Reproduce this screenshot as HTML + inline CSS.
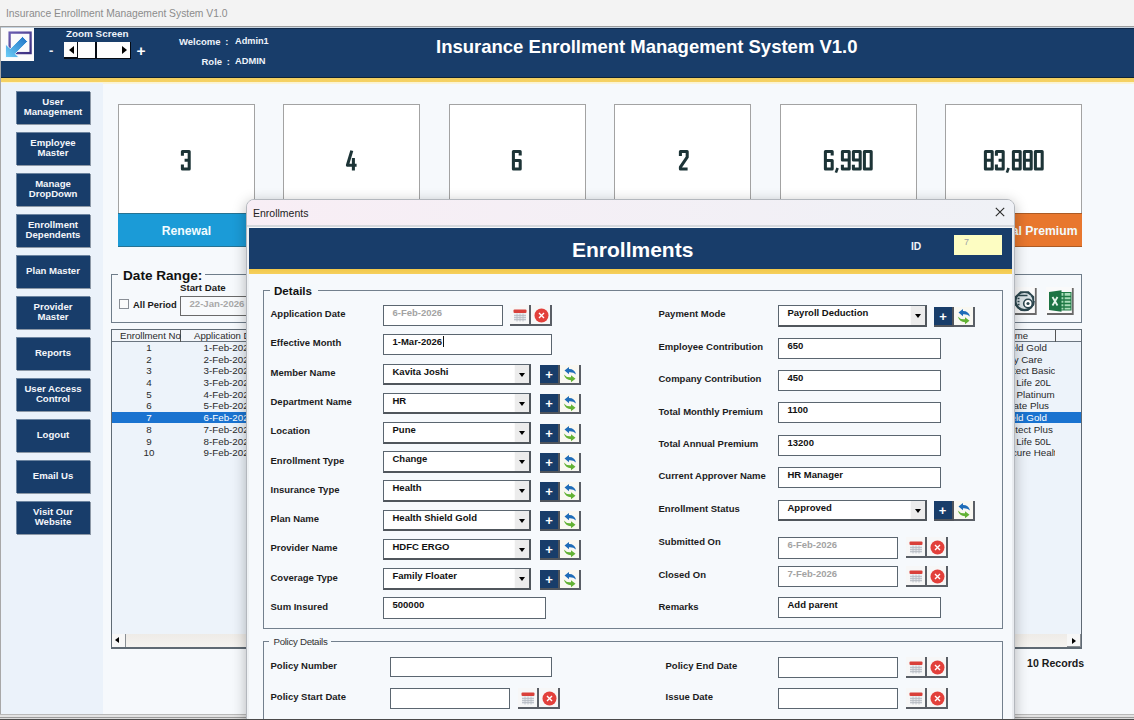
<!DOCTYPE html><html><head><meta charset="utf-8"><style>
*{box-sizing:border-box;margin:0;padding:0}
html,body{width:1134px;height:720px;overflow:hidden;background:#f3f3f3;font-family:"Liberation Sans",sans-serif}
.a{position:absolute}
.t{position:absolute;white-space:nowrap;line-height:1}
.b{font-weight:bold}
#wt{left:6px;top:9px;font-size:10.3px;color:#8c8c8c}
#frame{left:0;top:26px;width:1134px;height:694px;background:#f6f9fc;border-top:1px solid #9c9c9c;border-left:1px solid #a8a8a8}
#hdr{left:1px;top:27px;width:1133px;height:51px;background:#183d6a;border-top:1px solid #c5d3e0;border-bottom:1px solid #0f2438;box-shadow:inset 0 1px 0 #10294a}
#yel{left:1px;top:78px;width:1133px;height:6px;background:linear-gradient(#f3cf5e 0,#f6d265 4px,#fbf3cf 4px,#fbf6dc 6px)}
#side{left:1px;top:83px;width:102px;height:631px;background:#ebf2fa}
.sb{position:absolute;left:16px;width:74px;height:33px;background:#183d6a;box-shadow:1px 1px 0 #8c98a6,inset 1px 1px 0 #6c84a0;color:#f4f6fa;font-weight:bold;font-size:9.6px;text-align:center;display:flex;align-items:center;justify-content:center;line-height:10px;padding-bottom:0.5px}
.card{position:absolute;top:104px;width:137px;height:142px;background:#fff;border:1px solid #a3a3a3}
.card .n{position:absolute;left:0;right:0;top:42px;text-align:center;font-weight:bold;font-size:29px;color:#1e3537;transform:scaleX(0.69);line-height:1}
.card .lb{position:absolute;left:-1px;right:-1px;top:108px;height:34px;padding-top:0px;border-top:1px solid rgba(60,40,20,0.35);border-bottom:1px solid rgba(60,40,20,0.35);color:#f2fbff;font-weight:bold;font-size:12.2px;white-space:nowrap;text-align:center;line-height:34px}
#bot{left:0;top:714px;width:1134px;height:6px;background:linear-gradient(#b9b9b9 0,#b9b9b9 1px,#e2e2e2 1px,#e2e2e2 3px,#9a9a9a 3px,#9a9a9a 4px,#dcdcdc 4px,#dcdcdc 5px,#555 5px)}
.tb{position:absolute;background:#fff;border:2px solid #5b6670;border-width:1.5px 1.7px 1.7px 1.5px}
.tx{position:absolute;white-space:nowrap;line-height:1;font-weight:bold;font-size:9.5px;color:#111}
.lbl{position:absolute;white-space:nowrap;line-height:1;font-weight:bold;font-size:9.5px;color:#1c1c1c}
.dd{position:absolute;top:0;right:0;width:15px;bottom:0;background:#ececec;border-left:1px solid #fafafa}
.dd:after{content:"";position:absolute;left:4px;top:8px;border-left:3.5px solid transparent;border-right:3.5px solid transparent;border-top:4px solid #000}
.pb{position:absolute;width:20px;height:20px;background:#183d6a;border-right:2px solid #50555c;border-bottom:2px solid #50555c}
.pb:after{content:"+";position:absolute;left:0;right:0;top:3px;text-align:center;color:#fff;font-weight:bold;font-size:13px;line-height:1}
.rb{position:absolute;width:21px;height:20px;background:#f9f8f2;border-right:2px solid #5a5f66;border-bottom:2px solid #5a5f66}
.cb{position:absolute;width:21px;height:21px;background:#f7f7f7;border-right:2px solid #5a5f66;border-bottom:2px solid #5a5f66}
.xb{position:absolute;width:21px;height:21px;background:#f7f7f7;border-right:2px solid #5a5f66;border-bottom:2px solid #5a5f66}
</style></head><body>
<div class="t" id="wt">Insurance Enrollment Management System V1.0</div>
<div class="a" id="frame"></div><div class="a" id="hdr"></div><div class="a" id="yel"></div><div class="a" id="side"></div>
<div class="a" style="left:1px;top:28px;width:33px;height:33px;background:#fbfbfb"></div>
<svg class="a" style="left:1px;top:28px" width="34" height="34" viewBox="0 0 34 34">
<defs><linearGradient id="ag" x1="0" y1="1" x2="1" y2="0"><stop offset="0" stop-color="#6fd0f8"/><stop offset="1" stop-color="#1c70c4"/></linearGradient>
<linearGradient id="pg" x1="0" y1="0" x2="1" y2="1"><stop offset="0" stop-color="#6a5db0"/><stop offset="1" stop-color="#3b2f80"/></linearGradient></defs>
<rect x="8.6" y="4.6" width="21" height="20.5" fill="none" stroke="url(#pg)" stroke-width="2.3"/>
<path d="M21.5 8.5 L26.5 13.5 L14.25 25.75 L18 29.5 L4.5 29.5 L4.5 16 L9.25 20.75 Z" fill="url(#ag)" stroke="#fff" stroke-width="0.8"/>
</svg>
<div class="t b" style="left:66px;top:28.5px;font-size:9.9px;color:#eef3fa">Zoom Screen</div>
<div class="t b" style="left:49px;top:44px;font-size:13px;color:#e8eef6">-</div>
<div class="t b" style="left:136.5px;top:42.5px;font-size:15.5px;color:#fff">+</div>
<div class="a" style="left:64px;top:42px;width:67px;height:17px;background:#050a12"></div>
<div class="a" style="left:64px;top:42px;width:13px;height:15px;background:#fdfdfd"></div>
<div class="a" style="left:78px;top:42px;width:17px;height:16px;background:#fdfdfd"></div>
<div class="a" style="left:97px;top:42px;width:33px;height:16px;background:#fdfdfd"></div>
<div class="a" style="left:69px;top:46px;width:0;height:0;border-top:4px solid transparent;border-bottom:4px solid transparent;border-right:5px solid #000"></div>
<div class="a" style="left:122px;top:46px;width:0;height:0;border-top:4px solid transparent;border-bottom:4px solid transparent;border-left:5px solid #000"></div>
<div class="t b" style="left:179px;top:36.5px;font-size:9.5px;color:#eef3fa;word-spacing:2px">Welcome :</div>
<div class="t b" style="left:235px;top:36.5px;font-size:9.2px;color:#eef3fa">Admin1</div>
<div class="t b" style="left:201.5px;top:57px;font-size:9.5px;color:#eef3fa;word-spacing:2px">Role :</div>
<div class="t b" style="left:235px;top:57px;font-size:9.3px;color:#eef3fa">ADMIN</div>
<div class="t b" style="left:436px;top:38px;font-size:18.5px;color:#fff">Insurance Enrollment Management System V1.0</div>

<div class="sb" style="top:91px">User<br>Management</div>
<div class="sb" style="top:132px">Employee<br>Master</div>
<div class="sb" style="top:173px">Manage<br>DropDown</div>
<div class="sb" style="top:214px">Enrollment<br>Dependents</div>
<div class="sb" style="top:255px">Plan Master</div>
<div class="sb" style="top:296px">Provider<br>Master</div>
<div class="sb" style="top:337px">Reports</div>
<div class="sb" style="top:378px">User Access<br>Control</div>
<div class="sb" style="top:419px">Logout</div>
<div class="sb" style="top:460px">Email Us</div>
<div class="sb" style="top:501px">Visit Our<br>Website</div>
<div class="card" style="left:118px"><div class="lb" style="background:#1b9bd7">Renewal</div></div>
<div class="card" style="left:283px"><div class="lb" style="background:#1b9bd7"></div></div>
<div class="card" style="left:449px"><div class="lb" style="background:#1b9bd7"></div></div>
<div class="card" style="left:614px"><div class="lb" style="background:#1b9bd7"></div></div>
<div class="card" style="left:780px"><div class="lb" style="background:#e8772e"></div></div>
<div class="card" style="left:945px"><div class="lb" style="background:#e8772e">Total Annual Premium</div></div>
<svg class="a" style="left:181px;top:150px;overflow:visible" width="11.0" height="23" viewBox="0 0 11.0 23"><path transform="translate(0.00 0)" d="M1.4 5.8V1.4H8.2V19H1.4V14.6M3.6 10.2H8.2" stroke="#1d3437" stroke-width="3.05" fill="none" stroke-linejoin="round"/></svg>
<svg class="a" style="left:346px;top:150px;overflow:visible" width="11.0" height="23" viewBox="0 0 11.0 23"><path transform="translate(0.00 0)" d="M5.8 0.6L1.4 15.2H10.6M7.4 8V20.4" stroke="#1d3437" stroke-width="3.05" fill="none" stroke-linejoin="round"/></svg>
<svg class="a" style="left:512px;top:150px;overflow:visible" width="11.0" height="23" viewBox="0 0 11.0 23"><path transform="translate(0.00 0)" d="M8.2 5.6V1.4H1.4V19H8.2V10.4H1.4" stroke="#1d3437" stroke-width="3.05" fill="none" stroke-linejoin="round"/></svg>
<svg class="a" style="left:678.5px;top:150px;overflow:visible" width="11.0" height="23" viewBox="0 0 11.0 23"><path transform="translate(0.00 0)" d="M1.4 6V1.4H8.2V7.2L1.4 17.2V19H8.6" stroke="#1d3437" stroke-width="3.05" fill="none" stroke-linejoin="round"/></svg>
<svg class="a" style="left:824px;top:150px;overflow:visible" width="50.0" height="23" viewBox="0 0 50.0 23"><path transform="translate(0.00 0)" d="M8.2 5.6V1.4H1.4V19H8.2V10.4H1.4" stroke="#1d3437" stroke-width="3.05" fill="none" stroke-linejoin="round"/><path d="M13.60 18 L11.90 22.6" stroke="#1d3437" stroke-width="2.6" fill="none"/><path transform="translate(17.00 0)" d="M1.4 14.8V19H8.2V1.4H1.4V10H8.2" stroke="#1d3437" stroke-width="3.05" fill="none" stroke-linejoin="round"/><path transform="translate(28.00 0)" d="M1.4 14.8V19H8.2V1.4H1.4V10H8.2" stroke="#1d3437" stroke-width="3.05" fill="none" stroke-linejoin="round"/><path transform="translate(39.00 0)" d="M1.4 1.4H8.2V19H1.4Z" stroke="#1d3437" stroke-width="3.05" fill="none" stroke-linejoin="round"/></svg>
<svg class="a" style="left:984.3px;top:150px;overflow:visible" width="61.0" height="23" viewBox="0 0 61.0 23"><path transform="translate(0.00 0)" d="M1.4 1.4H8.2V19H1.4ZM1.4 10.2H8.2" stroke="#1d3437" stroke-width="3.05" fill="none" stroke-linejoin="round"/><path transform="translate(11.00 0)" d="M1.4 5.8V1.4H8.2V19H1.4V14.6M3.6 10.2H8.2" stroke="#1d3437" stroke-width="3.05" fill="none" stroke-linejoin="round"/><path d="M24.60 18 L22.90 22.6" stroke="#1d3437" stroke-width="2.6" fill="none"/><path transform="translate(28.00 0)" d="M1.4 1.4H8.2V19H1.4ZM1.4 10.2H8.2" stroke="#1d3437" stroke-width="3.05" fill="none" stroke-linejoin="round"/><path transform="translate(39.00 0)" d="M1.4 1.4H8.2V19H1.4ZM1.4 10.2H8.2" stroke="#1d3437" stroke-width="3.05" fill="none" stroke-linejoin="round"/><path transform="translate(50.00 0)" d="M1.4 1.4H8.2V19H1.4Z" stroke="#1d3437" stroke-width="3.05" fill="none" stroke-linejoin="round"/></svg>
<div class="a" style="left:111px;top:273.5px;width:971px;height:49.5px;border:1px solid #6f7d8a;"></div>
<div class="a" style="left:118px;top:268px;width:87px;height:12px;background:#f6f9fc;"></div>
<div class="t" style="left:123px;top:268.5px;font-size:13.6px;font-weight:bold;color:#111;">Date Range:</div>
<div class="t" style="left:180px;top:283px;font-size:9.7px;font-weight:bold;color:#1a1a1a;">Start Date</div>
<div class="a" style="left:119px;top:299px;width:10px;height:10px;border:1px solid #8a8f96;background:#fbfbfb;"></div>
<div class="t" style="left:133px;top:300px;font-size:9.4px;font-weight:bold;color:#1a1a1a;">All Period</div>
<div class="a" style="left:180px;top:296px;width:80px;height:20px;border:1px solid #6a6a6a;background:#f8fafc;"></div>
<div class="t" style="left:189.5px;top:299px;font-size:9.6px;font-weight:bold;color:#a8a8a8;">22-Jan-2026</div>
<svg class="a" style="left:1012px;top:287px" width="25" height="28" viewBox="0 0 25 28">
<rect x="0" y="0" width="25" height="28" fill="#fafafa"/><path d="M23.8 1V27H1" stroke="#6a6a6a" stroke-width="1.8" fill="none"/>
<path d="M8.3 4.3 L16.7 4.3 L22.2 9.6 L22.2 18 L16.7 23.4 L8.3 23.4 L2.8 18 L2.8 9.6 Z" fill="#2c474f"/>
<circle cx="12.5" cy="13.9" r="8" fill="#d9e2e6"/>
<path d="M5.5 8.5h10M5.5 11.5h2M5.5 14.5h2M5.5 17.5h2" stroke="#2c474f" stroke-width="1.6"/>
<circle cx="16" cy="16.5" r="4.3" fill="#fff" stroke="#2c474f" stroke-width="1.6"/><circle cx="16" cy="16.5" r="1.6" fill="#2c474f"/>
<path d="M3 14 A9.5 9.5 0 0 0 22 14" fill="none" stroke="#2c474f" stroke-width="1.6"/>
</svg>
<svg class="a" style="left:1046px;top:287px" width="28" height="28" viewBox="0 0 28 28">
<rect x="0" y="0" width="28" height="28" fill="#fafafa"/><path d="M26.8 1V27H1" stroke="#6a6a6a" stroke-width="1.8" fill="none"/>
<rect x="14" y="5.5" width="11" height="17.5" fill="#a8dcb8" stroke="#1f7a45" stroke-width="1"/>
<path d="M14 9.5h11M14 13h11M14 16.5h11M14 20h11M18 5.5v17.5" stroke="#1f7a45" stroke-width="1.3"/>
<path d="M3 5 L15.5 3.3 V24.7 L3 23 Z" fill="#1d7444"/>
<path d="M6.5 10 L11.5 18.5 M11.5 10 L6.5 18.5" stroke="#e8f5ec" stroke-width="1.8"/>
</svg>
<div class="a" style="left:111px;top:329px;width:971px;height:320px;border:1px solid #5f6a74;border-width:1px 1px 2px 1px;background:#edf3fa;"></div>
<div class="a" style="left:112px;top:330px;width:969px;height:12px;background:#f3f6fa;border-bottom:1px solid #6b7580;"></div>
<div class="a" style="left:180px;top:330px;width:1px;height:12px;background:#555;"></div>
<div class="a" style="left:1055px;top:330px;width:1px;height:12px;background:#555;"></div>
<div class="t" style="left:120px;top:331px;font-size:9.6px;color:#2a2a2a;">Enrollment No</div>
<div class="t" style="left:194px;top:331px;font-size:9.6px;color:#2a2a2a;">Application Date</div>
<div class="t" style="right:106px;top:331px;font-size:9.6px;color:#2a2a2a">Plan Name</div>
<div class="t" style="left:112px;width:74px;top:342.79999999999995px;font-size:9.8px;color:#2a2a2a;text-align:center">1</div>
<div class="t" style="left:203.5px;top:342.79999999999995px;font-size:9.8px;color:#2a2a2a;">1-Feb-2026</div>
<div class="a" style="left:1000px;width:55px;top:341.4px;height:11.72px;overflow:hidden"><div class="t" style="right:8px;top:1.4px;font-size:9.8px;color:#2a2a2a">Health Shield Gold</div></div>
<div class="t" style="left:112px;width:74px;top:354.52px;font-size:9.8px;color:#2a2a2a;text-align:center">2</div>
<div class="t" style="left:203.5px;top:354.52px;font-size:9.8px;color:#2a2a2a;">2-Feb-2026</div>
<div class="a" style="left:1000px;width:55px;top:353.12px;height:11.72px;overflow:hidden"><div class="t" style="right:12.5px;top:1.4px;font-size:9.8px;color:#2a2a2a">Family Care</div></div>
<div class="t" style="left:112px;width:74px;top:366.23999999999995px;font-size:9.8px;color:#2a2a2a;text-align:center">3</div>
<div class="t" style="left:203.5px;top:366.23999999999995px;font-size:9.8px;color:#2a2a2a;">3-Feb-2026</div>
<div class="a" style="left:1000px;width:55px;top:364.84px;height:11.72px;overflow:hidden"><div class="t" style="right:-0.5px;top:1.4px;font-size:9.8px;color:#2a2a2a">Protect Basic</div></div>
<div class="t" style="left:112px;width:74px;top:377.96px;font-size:9.8px;color:#2a2a2a;text-align:center">4</div>
<div class="t" style="left:203.5px;top:377.96px;font-size:9.8px;color:#2a2a2a;">3-Feb-2026</div>
<div class="a" style="left:1000px;width:55px;top:376.56px;height:11.72px;overflow:hidden"><div class="t" style="right:4px;top:1.4px;font-size:9.8px;color:#2a2a2a">Term Life 20L</div></div>
<div class="t" style="left:112px;width:74px;top:389.67999999999995px;font-size:9.8px;color:#2a2a2a;text-align:center">5</div>
<div class="t" style="left:203.5px;top:389.67999999999995px;font-size:9.8px;color:#2a2a2a;">4-Feb-2026</div>
<div class="a" style="left:1000px;width:55px;top:388.28px;height:11.72px;overflow:hidden"><div class="t" style="right:0.2999999999999545px;top:1.4px;font-size:9.8px;color:#2a2a2a">Gold Platinum</div></div>
<div class="t" style="left:112px;width:74px;top:401.4px;font-size:9.8px;color:#2a2a2a;text-align:center">6</div>
<div class="t" style="left:203.5px;top:401.4px;font-size:9.8px;color:#2a2a2a;">5-Feb-2026</div>
<div class="a" style="left:1000px;width:55px;top:400.0px;height:11.72px;overflow:hidden"><div class="t" style="right:6px;top:1.4px;font-size:9.8px;color:#2a2a2a">Corporate Plus</div></div>
<div class="a" style="left:112px;top:411.71999999999997px;width:969px;height:11.720000000000027px;background:#1a73d0;"></div>
<div class="t" style="left:112px;width:74px;top:413.11999999999995px;font-size:9.8px;color:#fff;text-align:center">7</div>
<div class="t" style="left:203.5px;top:413.11999999999995px;font-size:9.8px;color:#fff;">6-Feb-2026</div>
<div class="a" style="left:1000px;width:55px;top:411.71999999999997px;height:11.72px;overflow:hidden"><div class="t" style="right:8px;top:1.4px;font-size:9.8px;color:#fff">Health Shield Gold</div></div>
<div class="t" style="left:112px;width:74px;top:424.84px;font-size:9.8px;color:#2a2a2a;text-align:center">8</div>
<div class="t" style="left:203.5px;top:424.84px;font-size:9.8px;color:#2a2a2a;">7-Feb-2026</div>
<div class="a" style="left:1000px;width:55px;top:423.44px;height:11.72px;overflow:hidden"><div class="t" style="right:2.2000000000000455px;top:1.4px;font-size:9.8px;color:#2a2a2a">Protect Plus</div></div>
<div class="t" style="left:112px;width:74px;top:436.55999999999995px;font-size:9.8px;color:#2a2a2a;text-align:center">9</div>
<div class="t" style="left:203.5px;top:436.55999999999995px;font-size:9.8px;color:#2a2a2a;">8-Feb-2026</div>
<div class="a" style="left:1000px;width:55px;top:435.15999999999997px;height:11.72px;overflow:hidden"><div class="t" style="right:4px;top:1.4px;font-size:9.8px;color:#2a2a2a">Term Life 50L</div></div>
<div class="t" style="left:112px;width:74px;top:448.28px;font-size:9.8px;color:#2a2a2a;text-align:center">10</div>
<div class="t" style="left:203.5px;top:448.28px;font-size:9.8px;color:#2a2a2a;">9-Feb-2026</div>
<div class="a" style="left:1000px;width:55px;top:446.88px;height:11.72px;overflow:hidden"><div class="t" style="right:-7px;top:1.4px;font-size:9.8px;color:#2a2a2a">Secure Health</div></div>
<div class="a" style="left:112px;top:634px;width:969px;height:13px;background:linear-gradient(#eeebe7,#f5f3f0);"></div>
<div class="a" style="left:112px;top:634px;width:14px;height:13px;background:#f7f7f7;border-right:1.5px solid #8a8f94;"></div>
<div class="a" style="left:115px;top:637px;border-top:3.5px solid transparent;border-bottom:3.5px solid transparent;border-right:4px solid #000"></div>
<div class="a" style="left:1067px;top:634px;width:14px;height:13px;background:#f7f7f7;border-right:1px solid #8a8f94;border-bottom:1px solid #8a8f94;"></div>
<div class="a" style="left:1072px;top:637.5px;border-top:3.5px solid transparent;border-bottom:3.5px solid transparent;border-left:4px solid #000"></div>
<div class="t" style="left:1027px;top:658px;font-size:10.6px;font-weight:bold;color:#1a1a1a;">10 Records</div>
<div class="a" id="bot"></div>
<div class="a" style="left:246px;top:198.5px;width:769px;height:535px;background:#f6f9fc;border:1px solid #b3b7bd;border-radius:8px 8px 0 0;box-shadow:0 3px 14px rgba(0,0,0,0.28)"></div>
<div class="a" style="left:247px;top:199.5px;width:767px;height:25.5px;background:linear-gradient(90deg,#f8eef5,#eff1f6);border-radius:7px 7px 0 0;"></div>
<div class="a" style="left:247px;top:225px;width:767px;height:2px;background:#d5d8dd;"></div>
<div class="a" style="left:247px;top:227px;width:2px;height:493px;background:#eef1f4;"></div>
<div class="a" style="left:1012px;top:227px;width:2px;height:493px;background:#e9ecf0;"></div>
<div class="t" style="left:253px;top:207.5px;font-size:10.5px;color:#222;">Enrollments</div>
<svg class="a" style="left:995px;top:206.5px" width="10" height="10" viewBox="0 0 10 10"><path d="M0.8 0.8L9.2 9.2M9.2 0.8L0.8 9.2" stroke="#2a2a2a" stroke-width="1.1"/></svg>
<div class="a" style="left:249px;top:227.5px;width:763px;height:41.69999999999999px;background:#183d6a;"></div>
<div class="a" style="left:249px;top:269.2px;width:763px;height:4.800000000000011px;background:linear-gradient(#f2c84a,#f5d05e);"></div>
<div class="t" style="left:572px;top:239px;font-size:21px;font-weight:bold;color:#fff;">Enrollments</div>
<div class="t" style="left:911px;top:241.5px;font-size:10.3px;font-weight:bold;color:#f0f4f8;">ID</div>
<div class="a" style="left:954px;top:235px;width:48px;height:20px;background:#fdfdc2;"></div>
<div class="t" style="left:964px;top:237.5px;font-size:9px;color:#9aa0a6;">7</div>
<div class="a" style="left:262.5px;top:289.5px;width:740.5px;height:339.5px;border:1px solid #73808d;"></div>
<div class="a" style="left:270px;top:284px;width:48px;height:12px;background:#f5f9fc;"></div>
<div class="t" style="left:274px;top:285px;font-size:11.6px;font-weight:bold;color:#111;">Details</div>
<div class="t" style="left:270.5px;top:309px;font-size:9.5px;font-weight:bold;color:#1c1c1c;">Application Date</div>
<div class="t" style="left:270.5px;top:338px;font-size:9.5px;font-weight:bold;color:#1c1c1c;">Effective Month</div>
<div class="t" style="left:270.5px;top:367.5px;font-size:9.5px;font-weight:bold;color:#1c1c1c;">Member Name</div>
<div class="t" style="left:270.5px;top:397px;font-size:9.5px;font-weight:bold;color:#1c1c1c;">Department Name</div>
<div class="t" style="left:270.5px;top:426px;font-size:9.5px;font-weight:bold;color:#1c1c1c;">Location</div>
<div class="t" style="left:270.5px;top:455.5px;font-size:9.5px;font-weight:bold;color:#1c1c1c;">Enrollment Type</div>
<div class="t" style="left:270.5px;top:485px;font-size:9.5px;font-weight:bold;color:#1c1c1c;">Insurance Type</div>
<div class="t" style="left:270.5px;top:514px;font-size:9.5px;font-weight:bold;color:#1c1c1c;">Plan Name</div>
<div class="t" style="left:270.5px;top:543px;font-size:9.5px;font-weight:bold;color:#1c1c1c;">Provider Name</div>
<div class="t" style="left:270.5px;top:573px;font-size:9.5px;font-weight:bold;color:#1c1c1c;">Coverage Type</div>
<div class="t" style="left:270.5px;top:602px;font-size:9.5px;font-weight:bold;color:#1c1c1c;">Sum Insured</div>
<div class="tb" style="left:383px;top:305px;width:120px;height:21px"></div>
<div class="t" style="left:392.5px;top:308px;font-size:9.5px;font-weight:bold;color:#a3a3a3;">6-Feb-2026</div>
<div class="cb" style="left:510px;top:305px"><svg style="position:absolute;left:3px;top:4px" width="14" height="13" viewBox="0 0 14 13">
<rect x="0.5" y="0.5" width="13" height="3.5" rx="1" fill="#d9403a"/><rect x="1" y="4.5" width="12" height="7.5" fill="#e4e6ea"/>
<path d="M1 6.5h12M1 8.5h12M1 10.5h12M4 4.5v8M7 4.5v8M10 4.5v8" stroke="#b5bac2" stroke-width="0.8"/></svg></div>
<div class="xb" style="left:531px;top:305px"><svg style="position:absolute;left:3px;top:3px" width="15" height="15" viewBox="0 0 15 15">
<circle cx="7.5" cy="7.5" r="7" fill="#e2403b"/><path d="M5 5L10 10M10 5L5 10" stroke="#fff" stroke-width="1.4"/></svg></div>
<div class="tb" style="left:383px;top:334px;width:169px;height:21px"></div>
<div class="t" style="left:392.5px;top:337px;font-size:9.5px;font-weight:bold;color:#111;">1-Mar-2026</div>
<div class="a" style="left:443px;top:336px;width:1px;height:11px;background:#111;"></div>
<div class="tb" style="left:383px;top:363.6px;width:148px;height:21.5px;border-width:1.5px 2.5px 2.5px 1.5px;border-right-color:#50565c;border-bottom-color:#50565c"><div class="dd"></div></div>
<div class="t" style="left:392.5px;top:366.6px;font-size:9.5px;font-weight:bold;color:#111;">Kavita Joshi</div>
<div class="pb" style="left:540px;top:365.1px"></div>
<div class="rb" style="left:560px;top:365.1px"><svg style="position:absolute;left:0;top:0" width="19" height="18" viewBox="0 0 19 18">
<path d="M4.5 5.5 L9 2 L9 4 Q14.5 3.8 16 9.5 Q13.2 6.8 9 7.2 L9 9.3 Z" fill="#1f6cb8"/>
<path d="M3.8 9.5 Q6.5 12.8 11 12.3 L11 10.2 L15.5 13.8 L11 17.3 L11 15.2 Q5.5 15 3.8 9.5 Z" fill="#62b234"/>
</svg></div>
<div class="tb" style="left:383px;top:392.8px;width:148px;height:21.5px;border-width:1.5px 2.5px 2.5px 1.5px;border-right-color:#50565c;border-bottom-color:#50565c"><div class="dd"></div></div>
<div class="t" style="left:392.5px;top:395.8px;font-size:9.5px;font-weight:bold;color:#111;">HR</div>
<div class="pb" style="left:540px;top:394.3px"></div>
<div class="rb" style="left:560px;top:394.3px"><svg style="position:absolute;left:0;top:0" width="19" height="18" viewBox="0 0 19 18">
<path d="M4.5 5.5 L9 2 L9 4 Q14.5 3.8 16 9.5 Q13.2 6.8 9 7.2 L9 9.3 Z" fill="#1f6cb8"/>
<path d="M3.8 9.5 Q6.5 12.8 11 12.3 L11 10.2 L15.5 13.8 L11 17.3 L11 15.2 Q5.5 15 3.8 9.5 Z" fill="#62b234"/>
</svg></div>
<div class="tb" style="left:383px;top:422.0px;width:148px;height:21.5px;border-width:1.5px 2.5px 2.5px 1.5px;border-right-color:#50565c;border-bottom-color:#50565c"><div class="dd"></div></div>
<div class="t" style="left:392.5px;top:425.0px;font-size:9.5px;font-weight:bold;color:#111;">Pune</div>
<div class="pb" style="left:540px;top:423.5px"></div>
<div class="rb" style="left:560px;top:423.5px"><svg style="position:absolute;left:0;top:0" width="19" height="18" viewBox="0 0 19 18">
<path d="M4.5 5.5 L9 2 L9 4 Q14.5 3.8 16 9.5 Q13.2 6.8 9 7.2 L9 9.3 Z" fill="#1f6cb8"/>
<path d="M3.8 9.5 Q6.5 12.8 11 12.3 L11 10.2 L15.5 13.8 L11 17.3 L11 15.2 Q5.5 15 3.8 9.5 Z" fill="#62b234"/>
</svg></div>
<div class="tb" style="left:383px;top:451.20000000000005px;width:148px;height:21.5px;border-width:1.5px 2.5px 2.5px 1.5px;border-right-color:#50565c;border-bottom-color:#50565c"><div class="dd"></div></div>
<div class="t" style="left:392.5px;top:454.20000000000005px;font-size:9.5px;font-weight:bold;color:#111;">Change</div>
<div class="pb" style="left:540px;top:452.70000000000005px"></div>
<div class="rb" style="left:560px;top:452.70000000000005px"><svg style="position:absolute;left:0;top:0" width="19" height="18" viewBox="0 0 19 18">
<path d="M4.5 5.5 L9 2 L9 4 Q14.5 3.8 16 9.5 Q13.2 6.8 9 7.2 L9 9.3 Z" fill="#1f6cb8"/>
<path d="M3.8 9.5 Q6.5 12.8 11 12.3 L11 10.2 L15.5 13.8 L11 17.3 L11 15.2 Q5.5 15 3.8 9.5 Z" fill="#62b234"/>
</svg></div>
<div class="tb" style="left:383px;top:480.40000000000003px;width:148px;height:21.5px;border-width:1.5px 2.5px 2.5px 1.5px;border-right-color:#50565c;border-bottom-color:#50565c"><div class="dd"></div></div>
<div class="t" style="left:392.5px;top:483.40000000000003px;font-size:9.5px;font-weight:bold;color:#111;">Health</div>
<div class="pb" style="left:540px;top:481.90000000000003px"></div>
<div class="rb" style="left:560px;top:481.90000000000003px"><svg style="position:absolute;left:0;top:0" width="19" height="18" viewBox="0 0 19 18">
<path d="M4.5 5.5 L9 2 L9 4 Q14.5 3.8 16 9.5 Q13.2 6.8 9 7.2 L9 9.3 Z" fill="#1f6cb8"/>
<path d="M3.8 9.5 Q6.5 12.8 11 12.3 L11 10.2 L15.5 13.8 L11 17.3 L11 15.2 Q5.5 15 3.8 9.5 Z" fill="#62b234"/>
</svg></div>
<div class="tb" style="left:383px;top:509.6px;width:148px;height:21.5px;border-width:1.5px 2.5px 2.5px 1.5px;border-right-color:#50565c;border-bottom-color:#50565c"><div class="dd"></div></div>
<div class="t" style="left:392.5px;top:512.6px;font-size:9.5px;font-weight:bold;color:#111;">Health Shield Gold</div>
<div class="pb" style="left:540px;top:511.1px"></div>
<div class="rb" style="left:560px;top:511.1px"><svg style="position:absolute;left:0;top:0" width="19" height="18" viewBox="0 0 19 18">
<path d="M4.5 5.5 L9 2 L9 4 Q14.5 3.8 16 9.5 Q13.2 6.8 9 7.2 L9 9.3 Z" fill="#1f6cb8"/>
<path d="M3.8 9.5 Q6.5 12.8 11 12.3 L11 10.2 L15.5 13.8 L11 17.3 L11 15.2 Q5.5 15 3.8 9.5 Z" fill="#62b234"/>
</svg></div>
<div class="tb" style="left:383px;top:538.8px;width:148px;height:21.5px;border-width:1.5px 2.5px 2.5px 1.5px;border-right-color:#50565c;border-bottom-color:#50565c"><div class="dd"></div></div>
<div class="t" style="left:392.5px;top:541.8px;font-size:9.5px;font-weight:bold;color:#111;">HDFC ERGO</div>
<div class="pb" style="left:540px;top:540.3px"></div>
<div class="rb" style="left:560px;top:540.3px"><svg style="position:absolute;left:0;top:0" width="19" height="18" viewBox="0 0 19 18">
<path d="M4.5 5.5 L9 2 L9 4 Q14.5 3.8 16 9.5 Q13.2 6.8 9 7.2 L9 9.3 Z" fill="#1f6cb8"/>
<path d="M3.8 9.5 Q6.5 12.8 11 12.3 L11 10.2 L15.5 13.8 L11 17.3 L11 15.2 Q5.5 15 3.8 9.5 Z" fill="#62b234"/>
</svg></div>
<div class="tb" style="left:383px;top:568.0px;width:148px;height:21.5px;border-width:1.5px 2.5px 2.5px 1.5px;border-right-color:#50565c;border-bottom-color:#50565c"><div class="dd"></div></div>
<div class="t" style="left:392.5px;top:571.0px;font-size:9.5px;font-weight:bold;color:#111;">Family Floater</div>
<div class="pb" style="left:540px;top:569.5px"></div>
<div class="rb" style="left:560px;top:569.5px"><svg style="position:absolute;left:0;top:0" width="19" height="18" viewBox="0 0 19 18">
<path d="M4.5 5.5 L9 2 L9 4 Q14.5 3.8 16 9.5 Q13.2 6.8 9 7.2 L9 9.3 Z" fill="#1f6cb8"/>
<path d="M3.8 9.5 Q6.5 12.8 11 12.3 L11 10.2 L15.5 13.8 L11 17.3 L11 15.2 Q5.5 15 3.8 9.5 Z" fill="#62b234"/>
</svg></div>
<div class="tb" style="left:383px;top:597px;width:163px;height:21.5px"></div>
<div class="t" style="left:392.5px;top:600px;font-size:9.5px;font-weight:bold;color:#111;">500000</div>
<div class="t" style="left:658.5px;top:309px;font-size:9.5px;font-weight:bold;color:#1c1c1c;">Payment Mode</div>
<div class="t" style="left:658.5px;top:342px;font-size:9.5px;font-weight:bold;color:#1c1c1c;">Employee Contribution</div>
<div class="t" style="left:658.5px;top:374px;font-size:9.5px;font-weight:bold;color:#1c1c1c;">Company Contribution</div>
<div class="t" style="left:658.5px;top:407px;font-size:9.5px;font-weight:bold;color:#1c1c1c;">Total Monthly Premium</div>
<div class="t" style="left:658.5px;top:439px;font-size:9.5px;font-weight:bold;color:#1c1c1c;">Total Annual Premium</div>
<div class="t" style="left:658.5px;top:471px;font-size:9.5px;font-weight:bold;color:#1c1c1c;">Current Approver Name</div>
<div class="t" style="left:658.5px;top:504px;font-size:9.5px;font-weight:bold;color:#1c1c1c;">Enrollment Status</div>
<div class="t" style="left:658.5px;top:537px;font-size:9.5px;font-weight:bold;color:#1c1c1c;">Submitted On</div>
<div class="t" style="left:658.5px;top:569.5px;font-size:9.5px;font-weight:bold;color:#1c1c1c;">Closed On</div>
<div class="t" style="left:658.5px;top:602px;font-size:9.5px;font-weight:bold;color:#1c1c1c;">Remarks</div>
<div class="tb" style="left:778px;top:305px;width:149px;height:21.5px;border-width:1.5px 2.5px 2.5px 1.5px;border-right-color:#50565c;border-bottom-color:#50565c"><div class="dd"></div></div>
<div class="t" style="left:787.5px;top:308px;font-size:9.5px;font-weight:bold;color:#111;">Payroll Deduction</div>
<div class="pb" style="left:934px;top:306.5px"></div>
<div class="rb" style="left:954px;top:306.5px"><svg style="position:absolute;left:0;top:0" width="19" height="18" viewBox="0 0 19 18">
<path d="M4.5 5.5 L9 2 L9 4 Q14.5 3.8 16 9.5 Q13.2 6.8 9 7.2 L9 9.3 Z" fill="#1f6cb8"/>
<path d="M3.8 9.5 Q6.5 12.8 11 12.3 L11 10.2 L15.5 13.8 L11 17.3 L11 15.2 Q5.5 15 3.8 9.5 Z" fill="#62b234"/>
</svg></div>
<div class="tb" style="left:778px;top:337.6px;width:163px;height:21.0px"></div>
<div class="t" style="left:787.5px;top:340.6px;font-size:9.5px;font-weight:bold;color:#111;">650</div>
<div class="tb" style="left:778px;top:370px;width:163px;height:21px"></div>
<div class="t" style="left:787.5px;top:373px;font-size:9.5px;font-weight:bold;color:#111;">450</div>
<div class="tb" style="left:778px;top:402.4px;width:163px;height:21.0px"></div>
<div class="t" style="left:787.5px;top:405.4px;font-size:9.5px;font-weight:bold;color:#111;">1100</div>
<div class="tb" style="left:778px;top:434.8px;width:163px;height:21.0px"></div>
<div class="t" style="left:787.5px;top:437.8px;font-size:9.5px;font-weight:bold;color:#111;">13200</div>
<div class="tb" style="left:778px;top:467.2px;width:163px;height:21.0px"></div>
<div class="t" style="left:787.5px;top:470.2px;font-size:9.5px;font-weight:bold;color:#111;">HR Manager</div>
<div class="tb" style="left:778px;top:499.7px;width:149px;height:21.500000000000057px;border-width:1.5px 2.5px 2.5px 1.5px;border-right-color:#50565c;border-bottom-color:#50565c"><div class="dd"></div></div>
<div class="t" style="left:787.5px;top:502.7px;font-size:9.5px;font-weight:bold;color:#111;">Approved</div>
<div class="pb" style="left:933.5px;top:501px"></div>
<div class="rb" style="left:953.5px;top:501px"><svg style="position:absolute;left:0;top:0" width="19" height="18" viewBox="0 0 19 18">
<path d="M4.5 5.5 L9 2 L9 4 Q14.5 3.8 16 9.5 Q13.2 6.8 9 7.2 L9 9.3 Z" fill="#1f6cb8"/>
<path d="M3.8 9.5 Q6.5 12.8 11 12.3 L11 10.2 L15.5 13.8 L11 17.3 L11 15.2 Q5.5 15 3.8 9.5 Z" fill="#62b234"/>
</svg></div>
<div class="tb" style="left:778px;top:537px;width:120px;height:21.5px"></div>
<div class="t" style="left:787.5px;top:540px;font-size:9.5px;font-weight:bold;color:#a3a3a3;">6-Feb-2026</div>
<div class="cb" style="left:905.5px;top:537px"><svg style="position:absolute;left:3px;top:4px" width="14" height="13" viewBox="0 0 14 13">
<rect x="0.5" y="0.5" width="13" height="3.5" rx="1" fill="#d9403a"/><rect x="1" y="4.5" width="12" height="7.5" fill="#e4e6ea"/>
<path d="M1 6.5h12M1 8.5h12M1 10.5h12M4 4.5v8M7 4.5v8M10 4.5v8" stroke="#b5bac2" stroke-width="0.8"/></svg></div>
<div class="xb" style="left:926.5px;top:537px"><svg style="position:absolute;left:3px;top:3px" width="15" height="15" viewBox="0 0 15 15">
<circle cx="7.5" cy="7.5" r="7" fill="#e2403b"/><path d="M5 5L10 10M10 5L5 10" stroke="#fff" stroke-width="1.4"/></svg></div>
<div class="tb" style="left:778px;top:565.5px;width:120px;height:21.0px"></div>
<div class="t" style="left:787.5px;top:568.5px;font-size:9.5px;font-weight:bold;color:#a3a3a3;">7-Feb-2026</div>
<div class="cb" style="left:905.5px;top:565.5px"><svg style="position:absolute;left:3px;top:4px" width="14" height="13" viewBox="0 0 14 13">
<rect x="0.5" y="0.5" width="13" height="3.5" rx="1" fill="#d9403a"/><rect x="1" y="4.5" width="12" height="7.5" fill="#e4e6ea"/>
<path d="M1 6.5h12M1 8.5h12M1 10.5h12M4 4.5v8M7 4.5v8M10 4.5v8" stroke="#b5bac2" stroke-width="0.8"/></svg></div>
<div class="xb" style="left:926.5px;top:565.5px"><svg style="position:absolute;left:3px;top:3px" width="15" height="15" viewBox="0 0 15 15">
<circle cx="7.5" cy="7.5" r="7" fill="#e2403b"/><path d="M5 5L10 10M10 5L5 10" stroke="#fff" stroke-width="1.4"/></svg></div>
<div class="tb" style="left:778px;top:597.3px;width:163px;height:21.0px"></div>
<div class="t" style="left:787.5px;top:600.3px;font-size:9.5px;font-weight:bold;color:#111;">Add parent</div>
<div class="a" style="left:262.5px;top:641px;width:740.5px;height:89px;border:1px solid #73808d;"></div>
<div class="a" style="left:269px;top:635px;width:62px;height:12px;background:#f5f9fc;"></div>
<div class="t" style="left:273.5px;top:637px;font-size:9.7px;color:#333;letter-spacing:-0.3px;">Policy Details</div>
<div class="t" style="left:270.5px;top:661px;font-size:9.5px;font-weight:bold;color:#1c1c1c;">Policy Number</div>
<div class="t" style="left:270.5px;top:692px;font-size:9.5px;font-weight:bold;color:#1c1c1c;">Policy Start Date</div>
<div class="tb" style="left:390px;top:656.5px;width:162px;height:20.5px"></div>
<div class="tb" style="left:390px;top:688.2px;width:120px;height:20.5px"></div>
<div class="cb" style="left:517.5px;top:688.2px"><svg style="position:absolute;left:3px;top:4px" width="14" height="13" viewBox="0 0 14 13">
<rect x="0.5" y="0.5" width="13" height="3.5" rx="1" fill="#d9403a"/><rect x="1" y="4.5" width="12" height="7.5" fill="#e4e6ea"/>
<path d="M1 6.5h12M1 8.5h12M1 10.5h12M4 4.5v8M7 4.5v8M10 4.5v8" stroke="#b5bac2" stroke-width="0.8"/></svg></div>
<div class="xb" style="left:538.5px;top:688.2px"><svg style="position:absolute;left:3px;top:3px" width="15" height="15" viewBox="0 0 15 15">
<circle cx="7.5" cy="7.5" r="7" fill="#e2403b"/><path d="M5 5L10 10M10 5L5 10" stroke="#fff" stroke-width="1.4"/></svg></div>
<div class="t" style="left:665.5px;top:661px;font-size:9.5px;font-weight:bold;color:#1c1c1c;">Policy End Date</div>
<div class="t" style="left:665.5px;top:692px;font-size:9.5px;font-weight:bold;color:#1c1c1c;">Issue Date</div>
<div class="tb" style="left:778px;top:657px;width:120px;height:21px"></div>
<div class="cb" style="left:905.5px;top:657px"><svg style="position:absolute;left:3px;top:4px" width="14" height="13" viewBox="0 0 14 13">
<rect x="0.5" y="0.5" width="13" height="3.5" rx="1" fill="#d9403a"/><rect x="1" y="4.5" width="12" height="7.5" fill="#e4e6ea"/>
<path d="M1 6.5h12M1 8.5h12M1 10.5h12M4 4.5v8M7 4.5v8M10 4.5v8" stroke="#b5bac2" stroke-width="0.8"/></svg></div>
<div class="xb" style="left:926.5px;top:657px"><svg style="position:absolute;left:3px;top:3px" width="15" height="15" viewBox="0 0 15 15">
<circle cx="7.5" cy="7.5" r="7" fill="#e2403b"/><path d="M5 5L10 10M10 5L5 10" stroke="#fff" stroke-width="1.4"/></svg></div>
<div class="tb" style="left:778px;top:688.3px;width:120px;height:21.0px"></div>
<div class="cb" style="left:905.5px;top:688.3px"><svg style="position:absolute;left:3px;top:4px" width="14" height="13" viewBox="0 0 14 13">
<rect x="0.5" y="0.5" width="13" height="3.5" rx="1" fill="#d9403a"/><rect x="1" y="4.5" width="12" height="7.5" fill="#e4e6ea"/>
<path d="M1 6.5h12M1 8.5h12M1 10.5h12M4 4.5v8M7 4.5v8M10 4.5v8" stroke="#b5bac2" stroke-width="0.8"/></svg></div>
<div class="xb" style="left:926.5px;top:688.3px"><svg style="position:absolute;left:3px;top:3px" width="15" height="15" viewBox="0 0 15 15">
<circle cx="7.5" cy="7.5" r="7" fill="#e2403b"/><path d="M5 5L10 10M10 5L5 10" stroke="#fff" stroke-width="1.4"/></svg></div>
<div class="a" style="left:0px;top:718.5px;width:1134px;height:1.5px;background:#4a4a4a;"></div>
</body></html>
